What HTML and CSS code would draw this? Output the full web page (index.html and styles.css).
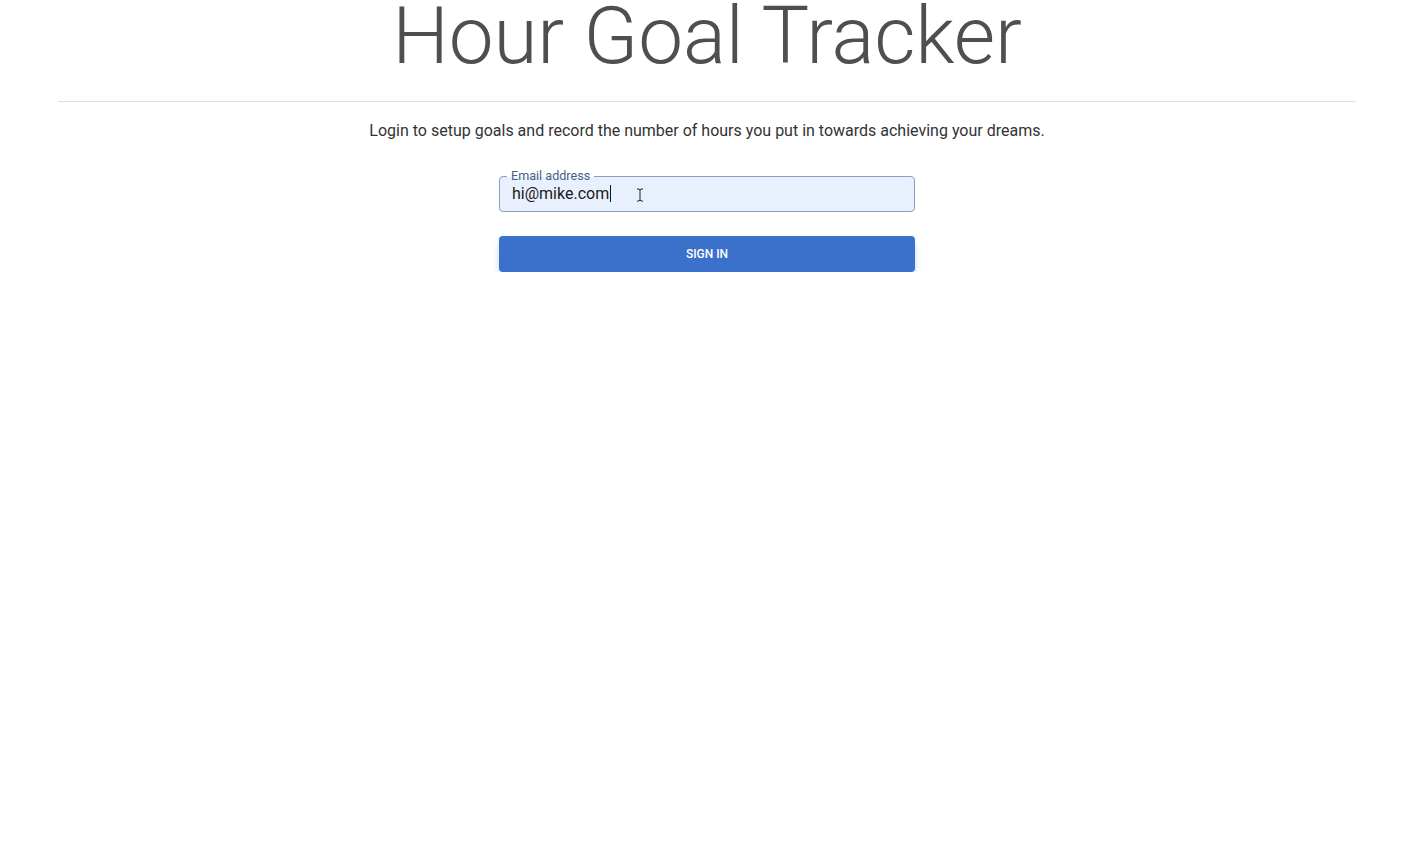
FILE: index.html
```html
<!DOCTYPE html>
<html lang="en">
<head>
<meta charset="utf-8">
<title>Hour Goal Tracker</title>
<link rel="stylesheet" href="styles.css">
</head>
<body>
<main class="page">
  <h1 class="title">Hour Goal Tracker</h1>
  <hr class="divider">
  <p class="lead">Login to setup goals and record the number of hours you put in towards achieving your dreams.</p>
  <form class="login">
    <div class="field">
      <span class="field-label">Email address</span>
      <div class="field-value"><span class="typed">hi@mike.com</span><span class="caret"></span></div>
      <svg class="ibeam" width="8" height="14" viewBox="0 0 8 14"><path d="M1 1h2l1 1 1-1h2M4 2v10M1 13h2l1-1 1 1h2" fill="none" stroke="#222" stroke-width="1"/></svg>
    </div>
    <button type="button" class="btn">Sign in</button>
  </form>
</main>
</body>
</html>
```
FILE: styles.css
```css
html, body {
  margin: 0;
  padding: 0;
  background: #fff;
}
body {
  font-family: Roboto, "Liberation Sans", sans-serif;
  color: #4f4f4f;
}
.page {
  padding: 0 62px 0 58px;
}
.title {
  margin: 0;
  font-size: 80px;
  font-weight: 300;
  line-height: 72px;
  text-align: center;
  color: #4f4f4f;
  letter-spacing: -0.1px;
}
.divider {
  margin: 29px 0 0;
  border: 0;
  border-top: 1px solid #e0e0e0;
  height: 0;
}
.lead {
  margin: 17px 0 0;
  font-size: 16px;
  line-height: 24px;
  text-align: center;
  color: #333;
}
.login {
  width: 416px;
  margin: 33px auto 0;
  display: flex;
  flex-direction: column;
  gap: 24px;
}
.field {
  position: relative;
  height: 36px;
  box-sizing: border-box;
  border: 1px solid #8c9ec0;
  border-radius: 4px;
  background: #e8f0fe;
  display: flex;
  align-items: center;
  padding: 0 12px;
}
.field-label {
  position: absolute;
  left: 7px;
  top: -8px;
  padding: 0 4px;
  font-size: 12.6px;
  line-height: 14px;
  color: #4a5f86;
  background: linear-gradient(#fff 0 8px, #e8f0fe 8px);
}
.field-value {
  display: flex;
  align-items: center;
  font-size: 16px;
  color: #1a1a1a;
  margin-top: -1px;
}
.caret {
  display: inline-block;
  width: 1px;
  height: 17px;
  background: #111;
  margin-left: 1px;
}
.ibeam {
  position: absolute;
  left: 136px;
  top: 11px;
}
.btn {
  height: 36px;
  border: 0;
  border-radius: 4px;
  background: #3b71ca;
  color: #fff;
  font-family: Roboto, "Liberation Sans", sans-serif;
  font-size: 12px;
  font-weight: 500;
  text-transform: uppercase;
  letter-spacing: 0;
  box-shadow: 0 4px 10px -3px rgba(59, 113, 202, 0.6);
  cursor: pointer;
}
```
